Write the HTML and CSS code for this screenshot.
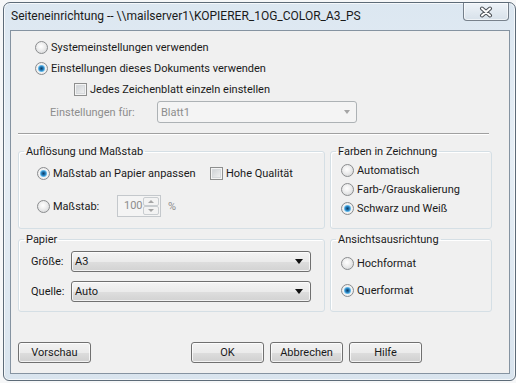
FILE: index.html
```html
<!DOCTYPE html>
<html>
  <head>
    <title>Seiteneinrichtung</title>
    <meta charset="UTF-8" />
    <link rel="stylesheet" href="styles.css">
  </head>

  <body>
    <div class="window">
      <div class="titlebar">
        <span class="title">Seiteneinrichtung -- \\mailserver1\KOPIERER_1OG_COLOR_A3_PS</span>
        <span class="close">
          <svg width="14" height="12" viewBox="0 0 14 12">
            <path d="M3 2.5 L11 9.5 M11 2.5 L3 9.5" stroke="#4a4f55" stroke-width="4" stroke-linecap="round" />
            <path d="M3 2.5 L11 9.5 M11 2.5 L3 9.5" stroke="#ffffff" stroke-width="2" stroke-linecap="round" />
          </svg>
        </span>
      </div>

      <div class="client">
        <div class="source">
          <div class="row tall"><span class="radio"></span>Systemeinstellungen verwenden</div>
          <div class="row tall"><span class="radio on"></span>Einstellungen dieses Dokuments verwenden</div>
          <div class="row sheet"><span class="check"></span>Jedes Zeichenblatt einzeln einstellen</div>
          <div class="row settings">
            <span class="settings-label">Einstellungen für:</span>
            <span class="combo disabled">Blatt1<span class="arrow"></span></span>
          </div>
        </div>

        <div class="sep"></div>

        <div class="groups">
          <fieldset class="group">
            <legend>Auflösung und Maßstab</legend>
            <div class="group-body scale">
              <div class="row">
                <span class="fit"><span class="radio on"></span>Maßstab an Papier anpassen</span>
                <span class="check"></span>Hohe Qualität
              </div>
              <div class="row">
                <span class="factor"><span class="radio"></span>Maßstab:</span>
                <span class="spinner">
                  <span class="spin-value">100</span>
                  <span class="spin-btns">
                    <span class="spin-btn"><span class="up"></span></span>
                    <span class="spin-btn"><span class="down"></span></span>
                  </span>
                </span>
                <span class="percent">%</span>
              </div>
            </div>
          </fieldset>

          <fieldset class="group">
            <legend>Farben in Zeichnung</legend>
            <div class="group-body colors">
              <div class="row"><span class="radio"></span>Automatisch</div>
              <div class="row"><span class="radio"></span>Farb-/Grauskalierung</div>
              <div class="row"><span class="radio on"></span>Schwarz und Weiß</div>
            </div>
          </fieldset>

          <fieldset class="group short">
            <legend>Papier</legend>
            <div class="group-body paper">
              <div class="row">
                <span class="paper-label">Größe:</span>
                <span class="combo">A3<span class="arrow"></span></span>
              </div>
              <div class="row">
                <span class="paper-label">Quelle:</span>
                <span class="combo">Auto<span class="arrow"></span></span>
              </div>
            </div>
          </fieldset>

          <fieldset class="group short">
            <legend>Ansichtsausrichtung</legend>
            <div class="group-body orient">
              <div class="row"><span class="radio"></span>Hochformat</div>
              <div class="row"><span class="radio on"></span>Querformat</div>
            </div>
          </fieldset>
        </div>

        <div class="buttons">
          <button class="btn preview">Vorschau</button>
          <button class="btn">OK</button>
          <button class="btn">Abbrechen</button>
          <button class="btn">Hilfe</button>
        </div>
      </div>
    </div>
  </body>
</html>
```

FILE: styles.css
```css
body {
  margin: 0;
  background: #f6f7f8;
  font-family: Roboto, "Open Sans", sans-serif;
  font-size: 11px;
  color: #1a1a1a;
}

.window {
  margin: 2px 0 0 3px;
  width: 513px;
  height: 379px;
  box-sizing: border-box;
  border: 1px solid #5d6b78;
  border-radius: 7px 7px 6px 6px;
  padding: 0 5px 6px 6px;
  background: linear-gradient(180deg, #dce7f1 0%, #e6eef5 40%, #d9e4ee 100%);
  box-shadow: inset 0 0 0 1px rgba(255, 255, 255, 0.7);
}

.titlebar {
  display: flex;
  justify-content: space-between;
  height: 27px;
}

.title {
  padding: 6px 0 0 1px;
  line-height: 15px;
  font-size: 12px;
}

.close {
  display: flex;
  align-items: center;
  justify-content: center;
  width: 46px;
  height: 18px;
  margin-right: 1px;
  box-sizing: border-box;
  border: 1px solid rgba(70, 82, 95, 0.7);
  border-top: none;
  border-radius: 0 0 4px 4px;
  background: linear-gradient(180deg, #eef3f8, #d7e1ea);
  box-shadow: inset 0 0 0 1px rgba(255, 255, 255, 0.6);
}

.client {
  height: 344px;
  box-sizing: border-box;
  border: 1px solid #8593a1;
  background: #f0f0f0;
}

.row {
  display: flex;
  align-items: center;
  white-space: nowrap;
}

.radio {
  flex: none;
  width: 13px;
  height: 13px;
  box-sizing: border-box;
  margin-right: 3px;
  border: 1px solid #8a8c8e;
  border-radius: 50%;
  background: radial-gradient(circle at 45% 40%, #ffffff 0, #f1f1f1 35%, #cfd1d3 100%);
}

.radio.on {
  background: radial-gradient(circle at 50% 50%, #0f3e62 0, #1f6ea8 1.6px, #3d9ad6 2.6px, #8cd0f3 3.4px, #f3f3f3 4px, #e2e3e4 100%);
}

.check {
  flex: none;
  width: 13px;
  height: 13px;
  box-sizing: border-box;
  margin-right: 3px;
  border: 1px solid #8e8f8f;
  background: linear-gradient(135deg, #c9cdd1, #f6f6f6);
  box-shadow: inset 0 0 0 1px #f4f4f4, inset 0 0 0 2px #d6d9dc;
}

/* top section */
.source {
  padding: 6px 0 0 24px;
}

.tall {
  height: 21px;
}

.sheet {
  height: 20px;
  padding-left: 39px;
}

.settings {
  height: 22px;
  margin-top: 2px;
  padding-left: 15px;
}

.settings-label {
  width: 107px;
  color: #8d8d8d;
}

.combo {
  position: relative;
  display: flex;
  align-items: center;
  width: 240px;
  height: 21px;
  box-sizing: border-box;
  padding-left: 3px;
  border: 1px solid #707070;
  border-radius: 3px;
  background: linear-gradient(180deg, #f4f4f4 0%, #ebebeb 50%, #dedede 51%, #d2d2d2 100%);
  box-shadow: inset 0 0 0 1px rgba(255, 255, 255, 0.7);
}

.combo .arrow {
  position: absolute;
  right: 7px;
  top: 7px;
  border-left: 4px solid transparent;
  border-right: 4px solid transparent;
  border-top: 5px solid #111;
}

.combo.disabled {
  width: 200px;
  height: 22px;
  color: #8d8d8d;
  border-color: #adb2b5;
  background: #f4f4f4;
  box-shadow: none;
}

.combo.disabled .arrow {
  top: 8px;
  right: 6px;
  border-left-width: 3px;
  border-right-width: 3px;
  border-top: 4px solid #a5a5a5;
}

.sep {
  height: 1px;
  margin: 10px 20px 9px 7px;
  background: #a0a0a0;
  border-bottom: 1px solid #ffffff;
}

/* groups */
.groups {
  display: grid;
  grid-template-columns: 307px 162px;
  column-gap: 5px;
  row-gap: 3px;
  padding-left: 7px;
}

.group {
  height: 85px;
  margin: 0;
  padding: 0 0 0 5px;
  min-width: 0;
  box-sizing: border-box;
  border: 1px solid #d5dfe5;
  border-radius: 3px;
  box-shadow: 1px 1px 0 #ffffff inset;
}

.group.short {
  height: 80px;
}

.group legend {
  padding: 0 2px;
  line-height: 15px;
}

.scale {
  padding: 3px 0 0 13px;
}

.scale .row {
  height: 22px;
}

.scale .row + .row {
  margin-top: 11px;
}

.fit {
  display: flex;
  align-items: center;
  width: 173px;
}

.factor {
  display: flex;
  align-items: center;
  width: 80px;
}

.spinner {
  display: flex;
  width: 44px;
  height: 22px;
  box-sizing: border-box;
  border: 1px solid #c4c8cc;
  background: #f4f4f4;
  color: #8d8d8d;
}

.spin-value {
  flex: 1;
  padding: 3px 0 0 6px;
}

.spin-btns {
  display: flex;
  flex-direction: column;
  width: 17px;
  padding: 1px 1px 1px 0;
}

.spin-btn {
  flex: 1;
  display: flex;
  align-items: center;
  justify-content: center;
  border: 1px solid #c9cdd0;
  border-radius: 2px;
  background: #f3f3f3;
}

.up {
  border-left: 3px solid transparent;
  border-right: 3px solid transparent;
  border-bottom: 3px solid #a5a5a5;
}

.down {
  border-left: 3px solid transparent;
  border-right: 3px solid transparent;
  border-top: 3px solid #a5a5a5;
}

.percent {
  margin-left: 7px;
  color: #8d8d8d;
}

.colors {
  padding: 2px 0 0 5px;
}

.colors .row {
  height: 19px;
}

.paper {
  padding: 4px 0 0 7px;
}

.paper .row {
  height: 21px;
}

.paper .row + .row {
  margin-top: 9px;
}

.paper-label {
  width: 40px;
}

.orient {
  padding: 5px 0 0 5px;
}

.orient .row {
  height: 22px;
}

.orient .row + .row {
  margin-top: 5px;
}

/* buttons */
.buttons {
  display: flex;
  gap: 6px;
  margin-top: 30px;
  padding-left: 7px;
}

.btn {
  width: 73px;
  height: 21px;
  margin: 0;
  padding: 0;
  font-family: inherit;
  font-size: 11px;
  color: #1a1a1a;
  border: 1px solid #707070;
  border-radius: 3px;
  background: linear-gradient(180deg, #f2f2f2 0%, #ebebeb 50%, #dddddd 51%, #cfcfcf 100%);
  box-shadow: inset 0 0 0 1px rgba(255, 255, 255, 0.75);
}

.preview {
  margin-right: 94px;
}
```
